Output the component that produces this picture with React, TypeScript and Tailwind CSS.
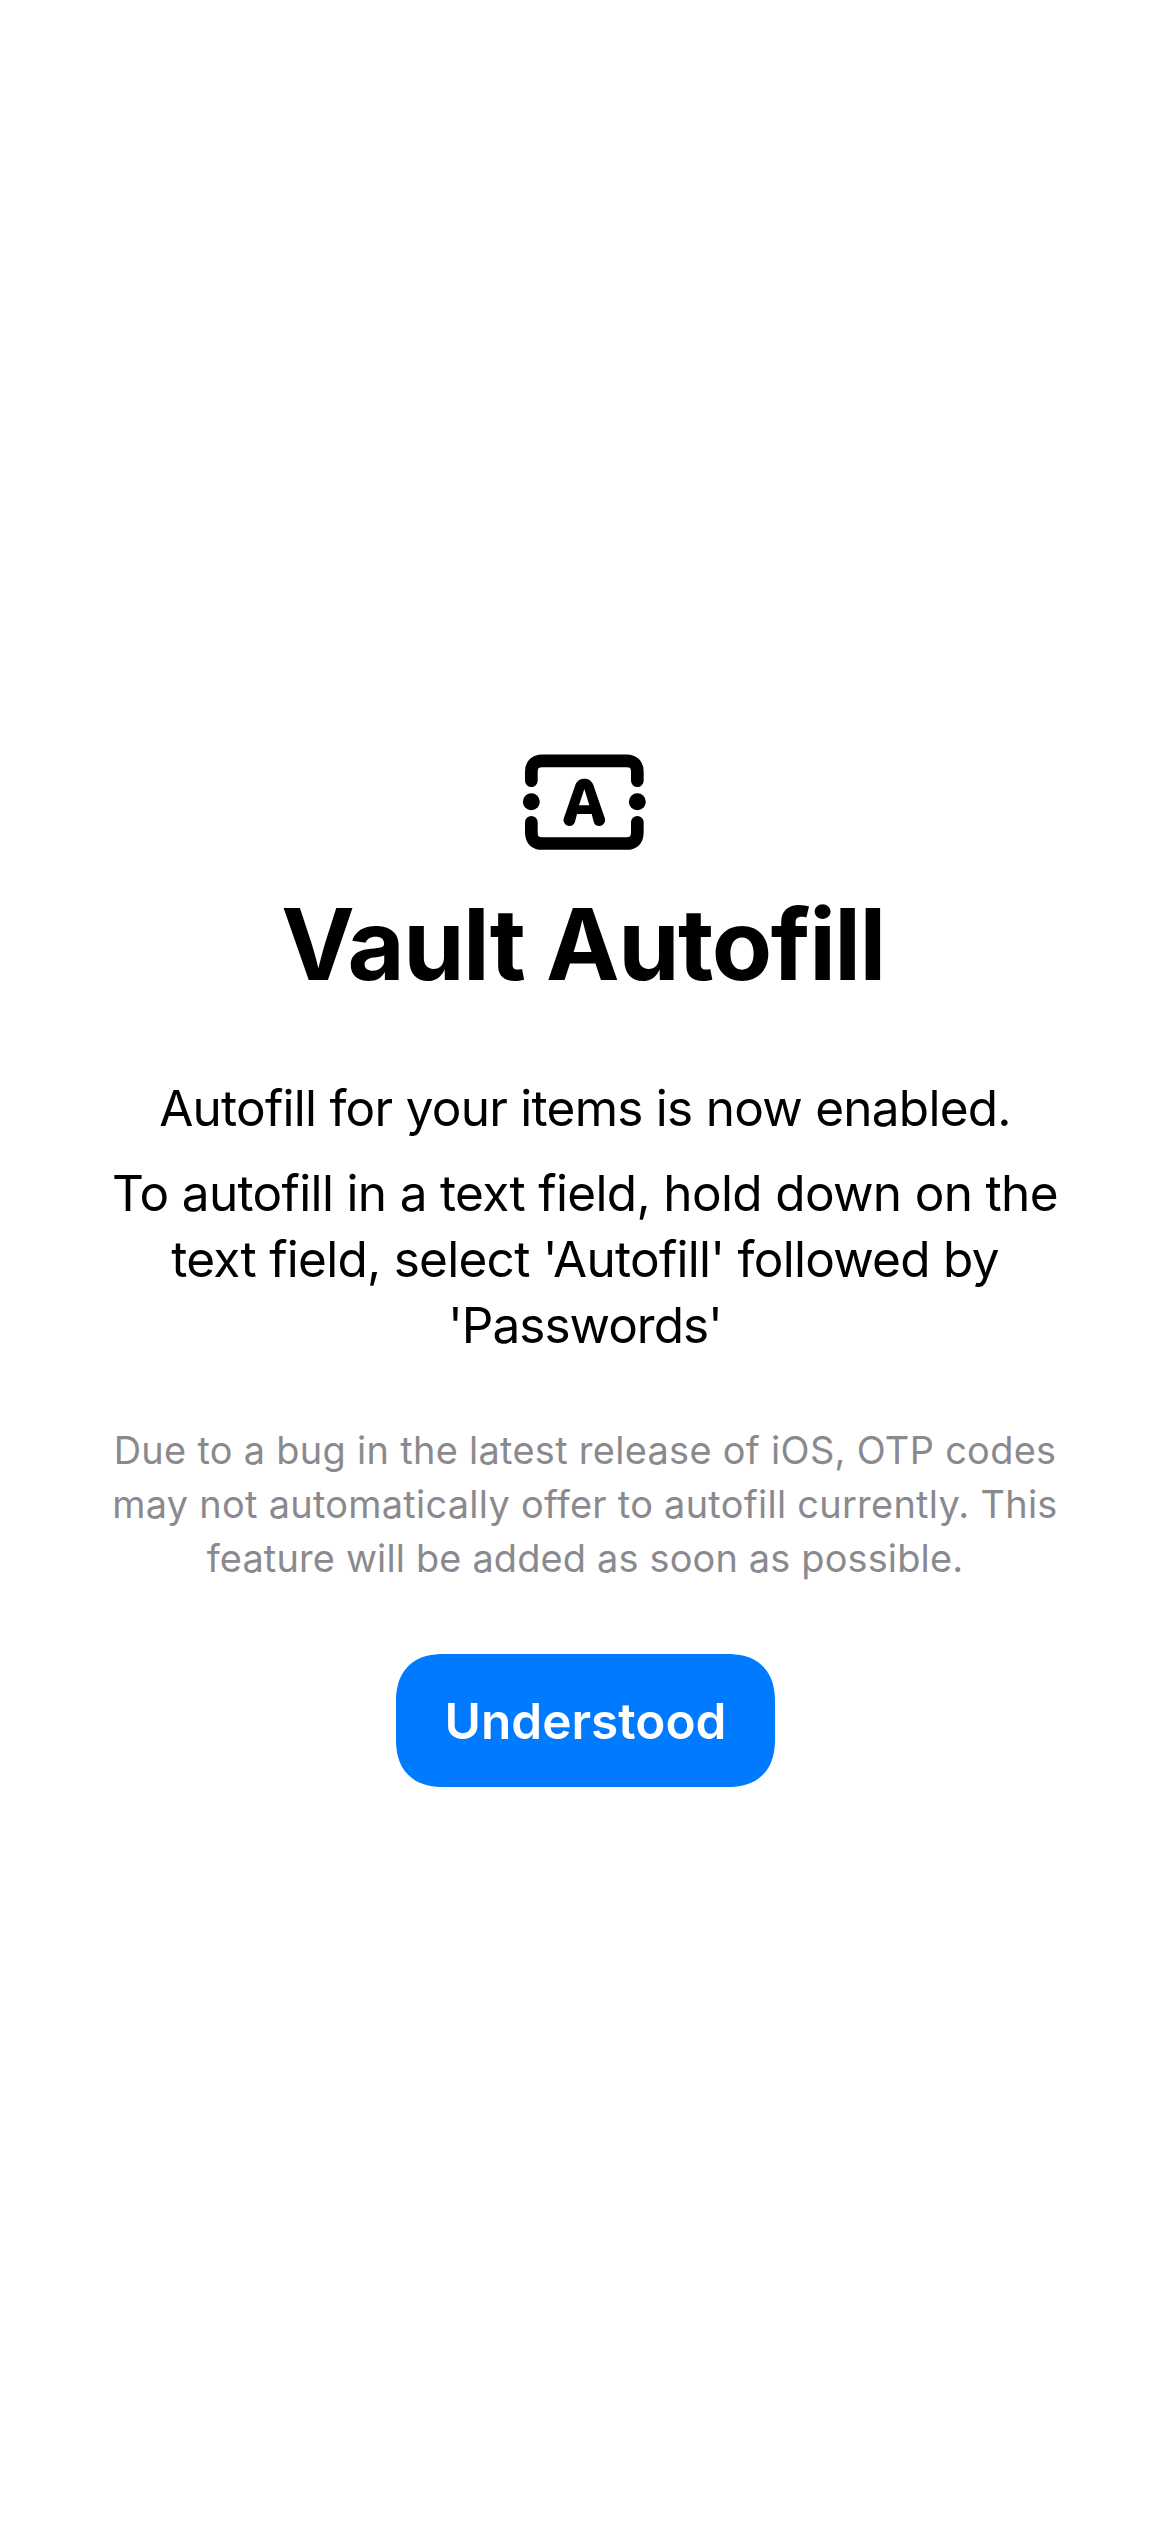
function AutofillIcon() {
  return (
    <svg className="h-[96px] w-[126px]" viewBox="36 42 378 288" fill="none" aria-hidden="true">
      <g stroke="#000" strokeWidth="38" strokeLinecap="round">
        <path d="M64 122V96Q64 62.5 97 62.5H349Q382 62.5 382 96V122" />
        <path d="M64 247V277Q64 310.5 97 310.5H349Q382 310.5 382 277V247" />
      </g>
      <g fill="#000">
        <circle cx="64" cy="185" r="25.5" />
        <circle cx="382" cy="185" r="25.5" />
        <path
          fillRule="evenodd"
          d="M223 116C236 116 245 122 250 135L284 233C286 238 286 243 284 247C281 254 275 258 268 258C259 258 254 254 251 245L245 222H201L195 245C192 254 187 258 178 258C171 258 165 254 162 247C160 243 160 238 162 233L196 135C201 122 210 116 223 116ZM223 147L207 196H238Z"
        />
      </g>
    </svg>
  );
}

export default function App() {
  return (
    <main className="flex min-h-[2532px] w-full flex-col items-center bg-white pt-[754px] text-center font-['Inter',sans-serif] text-black">
      <AutofillIcon />
      <h1 className="mt-[33px] pr-[4px] text-[98.6px] leading-[122px] font-bold tracking-[-1.52px] whitespace-nowrap">
        Vault Autofill
      </h1>
      <div className="mt-[70px] flex flex-col gap-[19px] text-[49.5px] leading-[66px] whitespace-nowrap">
        <p className="tracking-[-0.74px]">Autofill for your items is now enabled.</p>
        <p>
          <span className="block tracking-[-0.66px]">To autofill in a text field, hold down on the</span>
          <span className="block tracking-[-0.73px]">text field, select 'Autofill' followed by</span>
          <span className="block tracking-[-1px]">'Passwords'</span>
        </p>
      </div>
      <p className="mt-[65px] text-[37.9px] leading-[54px] whitespace-nowrap text-[#8a8a8e]">
        <span className="block tracking-[0.315px]">Due to a bug in the latest release of iOS, OTP codes</span>
        <span className="block tracking-[0.287px]">may not automatically offer to autofill currently. This</span>
        <span className="block tracking-[0.17px]">feature will be added as soon as possible.</span>
      </p>
      <button
        type="button"
        className="ml-px mt-[69px] h-[133px] w-[379px] rounded-[48px] bg-[#007aff] text-[49.5px] leading-[66px] font-semibold text-white [corner-shape:superellipse(1.25)]"
      >
        Understood
      </button>
    </main>
  );
}
